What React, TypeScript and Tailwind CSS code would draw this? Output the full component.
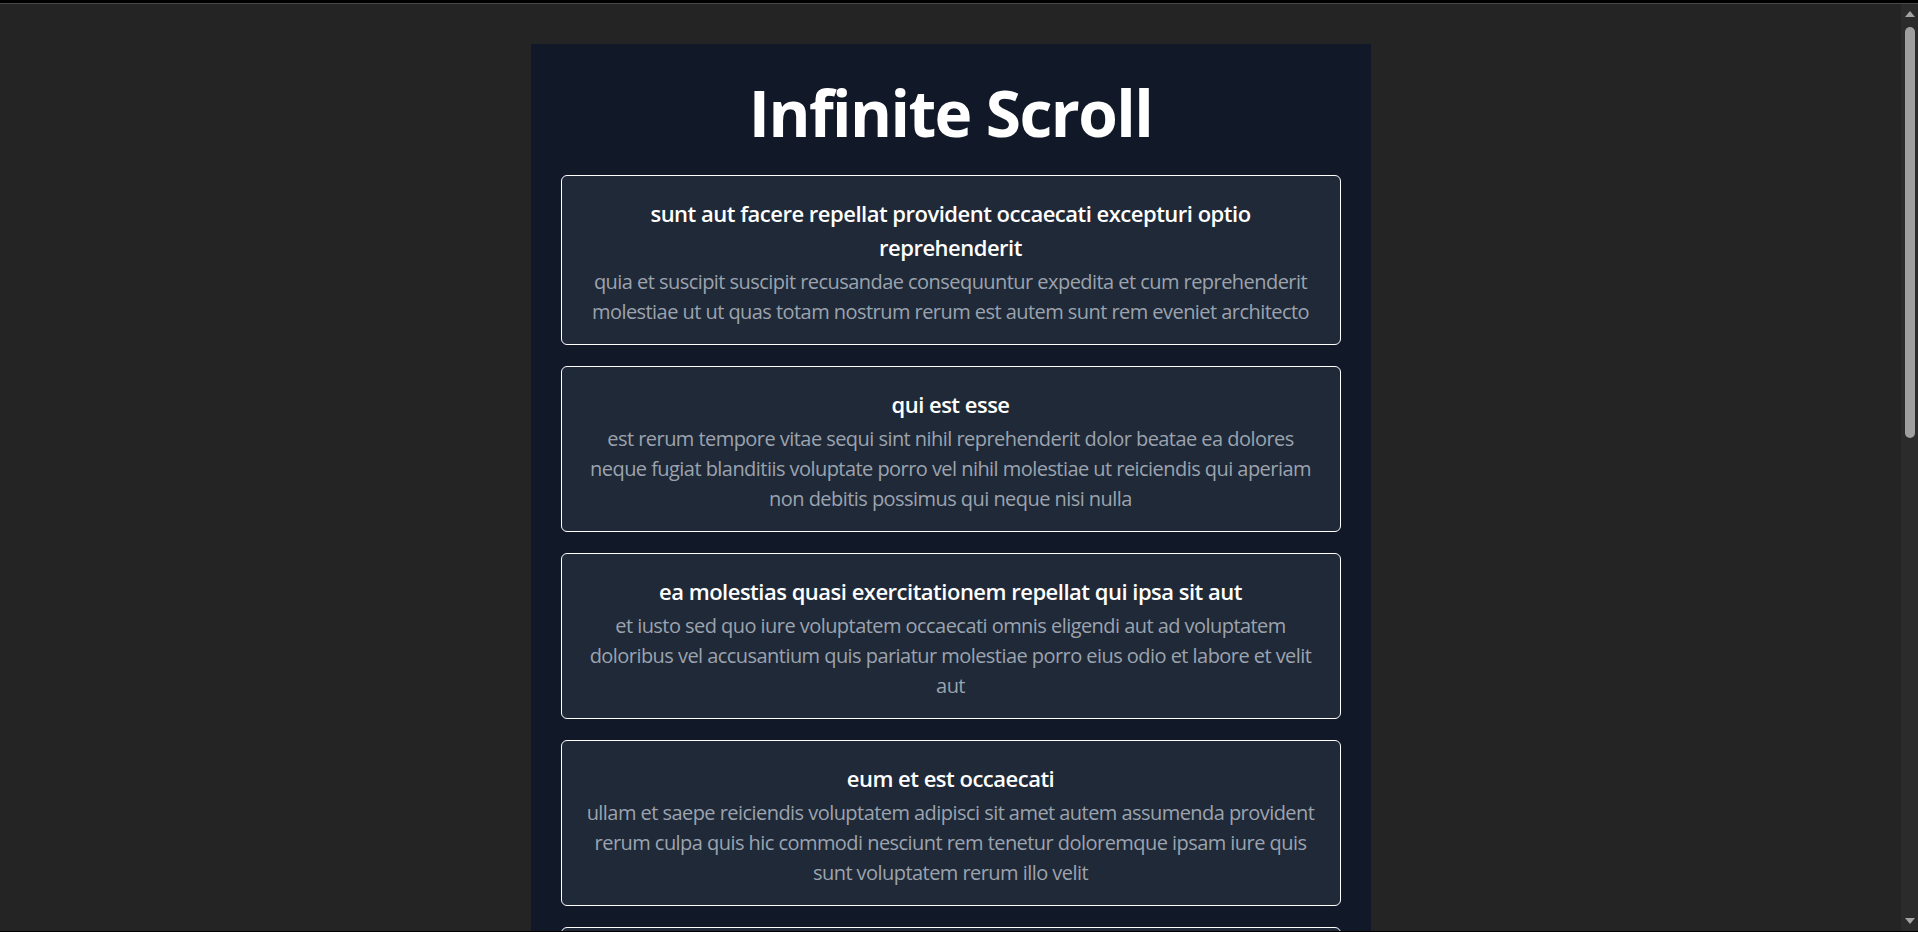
import React from "react";

interface Post {
  id: number;
  title: string;
  body: string;
}

const posts: Post[] = [
  {
    id: 1,
    title: "sunt aut facere repellat provident occaecati excepturi optio reprehenderit",
    body: "quia et suscipit\nsuscipit recusandae consequuntur expedita et cum\nreprehenderit molestiae ut ut quas totam\nnostrum rerum est autem sunt rem eveniet architecto",
  },
  {
    id: 2,
    title: "qui est esse",
    body: "est rerum tempore vitae\nsequi sint nihil reprehenderit dolor beatae ea dolores neque\nfugiat blanditiis voluptate porro vel nihil molestiae ut reiciendis\nqui aperiam non debitis possimus qui neque nisi nulla",
  },
  {
    id: 3,
    title: "ea molestias quasi exercitationem repellat qui ipsa sit aut",
    body: "et iusto sed quo iure\nvoluptatem occaecati omnis eligendi aut ad\nvoluptatem doloribus vel accusantium quis pariatur\nmolestiae porro eius odio et labore et velit aut",
  },
  {
    id: 4,
    title: "eum et est occaecati",
    body: "ullam et saepe reiciendis voluptatem adipisci\nsit amet autem assumenda provident rerum culpa\nquis hic commodi nesciunt rem tenetur doloremque ipsam iure\nquis sunt voluptatem rerum illo velit",
  },
  {
    id: 5,
    title: "nesciunt quas odio",
    body: "repudiandae veniam quaerat sunt sed\nalias aut fugiat sit autem sed est\nvoluptatem omnis possimus esse voluptatibus quis\nest aut tenetur dolor neque",
  },
  {
    id: 6,
    title: "dolorem eum magni eos aperiam quia",
    body: "ut aspernatur corporis harum nihil quis provident sequi\nmollitia nobis aliquid molestiae\nperspiciatis et ea nemo ab reprehenderit accusantium quas\nvoluptate dolores velit et doloremque molestiae",
  },
  {
    id: 7,
    title: "magnam facilis autem",
    body: "dolore placeat quibusdam ea quo vitae\nmagni quis enim qui quis quo nemo aut saepe\nquidem repellat excepturi ut quia\nsunt ut sequi eos ea sed quas",
  },
  {
    id: 8,
    title: "dolorem dolore est ipsam",
    body: "dignissimos aperiam dolorem qui eum\nfacilis quibusdam animi sint suscipit qui sint possimus cum\nquaerat magni maiores excepturi\nipsam ut commodi dolor voluptatum modi aut vitae",
  },
  {
    id: 9,
    title: "nesciunt iure omnis dolorem tempora et accusantium",
    body: "consectetur animi nesciunt iure dolore\nenim quia ad\nveniam autem ut quam aut nobis\net est aut quod aut provident voluptas autem voluptas",
  },
  {
    id: 10,
    title: "optio molestias id quia eum",
    body: "quo et expedita modi cum officia vel magni\ndoloribus qui repudiandae\nvero nisi sit\nquos veniam quod sed accusamus veritatis error",
  },
];

function PostCard({ post }: { post: Post }) {
  return (
    <div className="bg-[#1f2937] border border-white rounded-md px-5 pt-5 pb-[17px] text-center">
      <h2 className="text-[22px] leading-[34px] font-semibold tracking-[-0.5px] text-white mb-[3px]">
        {post.title}
      </h2>
      <p className="text-[20px] leading-[30px] tracking-[-0.55px] text-[#9ca3af]">{post.body}</p>
    </div>
  );
}

function Scrollbar() {
  return (
    <div className="w-[17px] bg-[#2b2b2b] flex flex-col items-center">
      <div className="h-[20px] flex items-center justify-center pl-[1px]">
        <div className="w-0 h-0 border-l-[5px] border-r-[5px] border-b-[6px] border-l-transparent border-r-transparent border-b-[#a3a3a3]" />
      </div>
      <div className="mt-[3px] w-[10px] h-[411px] rounded-full bg-[#9f9f9f] ml-[1px]" />
      <div className="flex-1" />
      <div className="h-[20px] flex items-center justify-center pl-[1px]">
        <div className="w-0 h-0 border-l-[5px] border-r-[5px] border-t-[6px] border-l-transparent border-r-transparent border-t-[#a3a3a3]" />
      </div>
    </div>
  );
}

export default function App() {
  return (
    <div
      className="h-[932px] flex flex-col bg-[#242424] overflow-hidden"
      style={{ fontFamily: '"Open Sans", "Noto Sans", sans-serif' }}
    >
      <div className="h-[3px] bg-black" />
      <div className="h-px bg-[#4a4a4a]" />
      <div className="flex flex-1 min-h-0">
        <div className="flex-1 overflow-hidden">
          <div className="w-[840px] mx-auto mt-[40px] bg-[#111827] px-[30px] pt-[30px] pb-[10px]">
            <h1 className="text-[64px] leading-[77px] font-bold tracking-[-1.6px] text-white text-center mb-[24px]">
              Infinite Scroll
            </h1>
            <div className="flex flex-col gap-[21px]">
              {posts.map((p) => (
                <PostCard key={p.id} post={p} />
              ))}
            </div>
          </div>
        </div>
        <Scrollbar />
      </div>
      <div className="h-px bg-black" />
    </div>
  );
}
